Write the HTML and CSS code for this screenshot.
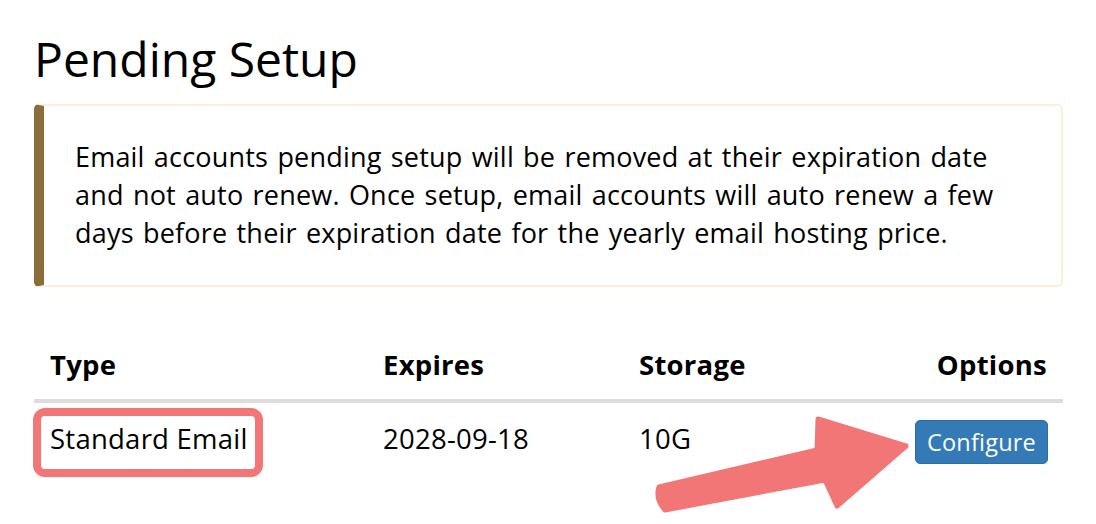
FILE: index.html
```html
<!DOCTYPE html>
<html lang="en">
<head>
<meta charset="utf-8">
<title>Pending Setup</title>
<link rel="stylesheet" href="styles.css">
</head>
<body>
<main class="page">
  <h2 class="title">Pending Setup</h2>
  <div class="alert">
    Email accounts pending setup will be removed at their expiration date and not auto renew. Once setup, email accounts will auto renew a few days before their expiration date for the yearly email hosting price.
  </div>
  <table class="table">
    <thead>
      <tr>
        <th class="col-type">Type</th>
        <th class="col-exp">Expires</th>
        <th class="col-storage">Storage</th>
        <th class="col-options">Options</th>
      </tr>
    </thead>
    <tbody>
      <tr>
        <td class="col-type"><span class="highlight">Standard Email</span></td>
        <td class="col-exp">2028-09-18</td>
        <td class="col-storage">10G</td>
        <td class="col-options"><button class="btn" type="button">Configure</button></td>
      </tr>
    </tbody>
  </table>
  <svg class="arrow" width="1096" height="524" viewBox="0 0 1096 524" aria-hidden="true">
    <path d="M659 487 L817 450 L818 419 L906 446 L837 506 L825 480 L665 510 Q655 499 659 487 Z" fill="#f27676" stroke="#f27676" stroke-width="5" stroke-linejoin="round"/>
  </svg>
</main>
</body>
</html>
```

FILE: styles.css
```css
html, body {
  margin: 0;
  padding: 0;
  background: #ffffff;
}

body {
  font-family: "Open Sans", "Liberation Sans", sans-serif;
  color: #000000;
  font-size: 27.5px;
  line-height: 40px;
  letter-spacing: 0.25px;
}

.page {
  position: relative;
  width: 1029px;
  padding: 0 0 0 34px;
  height: 524px;
  overflow: hidden;
}

.title {
  margin: 0;
  padding-top: 26px;
  font-size: 48px;
  font-weight: 400;
  line-height: 66px;
  height: 78px;
  letter-spacing: 0;
}

.alert {
  box-sizing: border-box;
  border: 2px solid #fcefd9;
  border-left: 10px solid #8a6d3b;
  border-radius: 5px;
  padding: 32px 40px 32px 31px;
  font-size: 27px;
  line-height: 38px;
  letter-spacing: 0.2px;
  word-spacing: 2px;
  height: 183px;
}

.table {
  width: 100%;
  border-collapse: collapse;
  margin-top: 40px;
}

.table th,
.table td {
  padding: 16px 16px;
  text-align: left;
  vertical-align: top;
}

.table th {
  font-weight: 700;
  padding-top: 18px;
  padding-bottom: 14px;
  border-bottom: 4px solid #dddddd;
}

.col-type { width: 301px; }
.col-exp { width: 224px; }
.col-storage { width: auto; }
.table .col-options { text-align: right; width: 133px; }

.table td.col-options {
  padding-top: 17px;
  padding-right: 15px;
}

.highlight {
  position: relative;
  display: inline-block;
}

.highlight::after {
  content: "";
  position: absolute;
  top: -11px;
  bottom: -18px;
  left: -17px;
  right: -15px;
  border: 8px solid #f27676;
  border-radius: 12px;
}

.btn {
  font-family: "Open Sans", "Liberation Sans", sans-serif;
  font-size: 23.5px;
  line-height: 32px;
  letter-spacing: 0.2px;
  color: #ffffff;
  background: #337ab7;
  border: 1.5px solid #2e6da4;
  border-radius: 5px;
  padding: 5px 8px;
  width: 133px;
  height: 44px;
  box-sizing: border-box;
  display: inline-block;
  vertical-align: top;
}

.arrow {
  position: absolute;
  left: 0;
  top: 0;
  pointer-events: none;
}
```
